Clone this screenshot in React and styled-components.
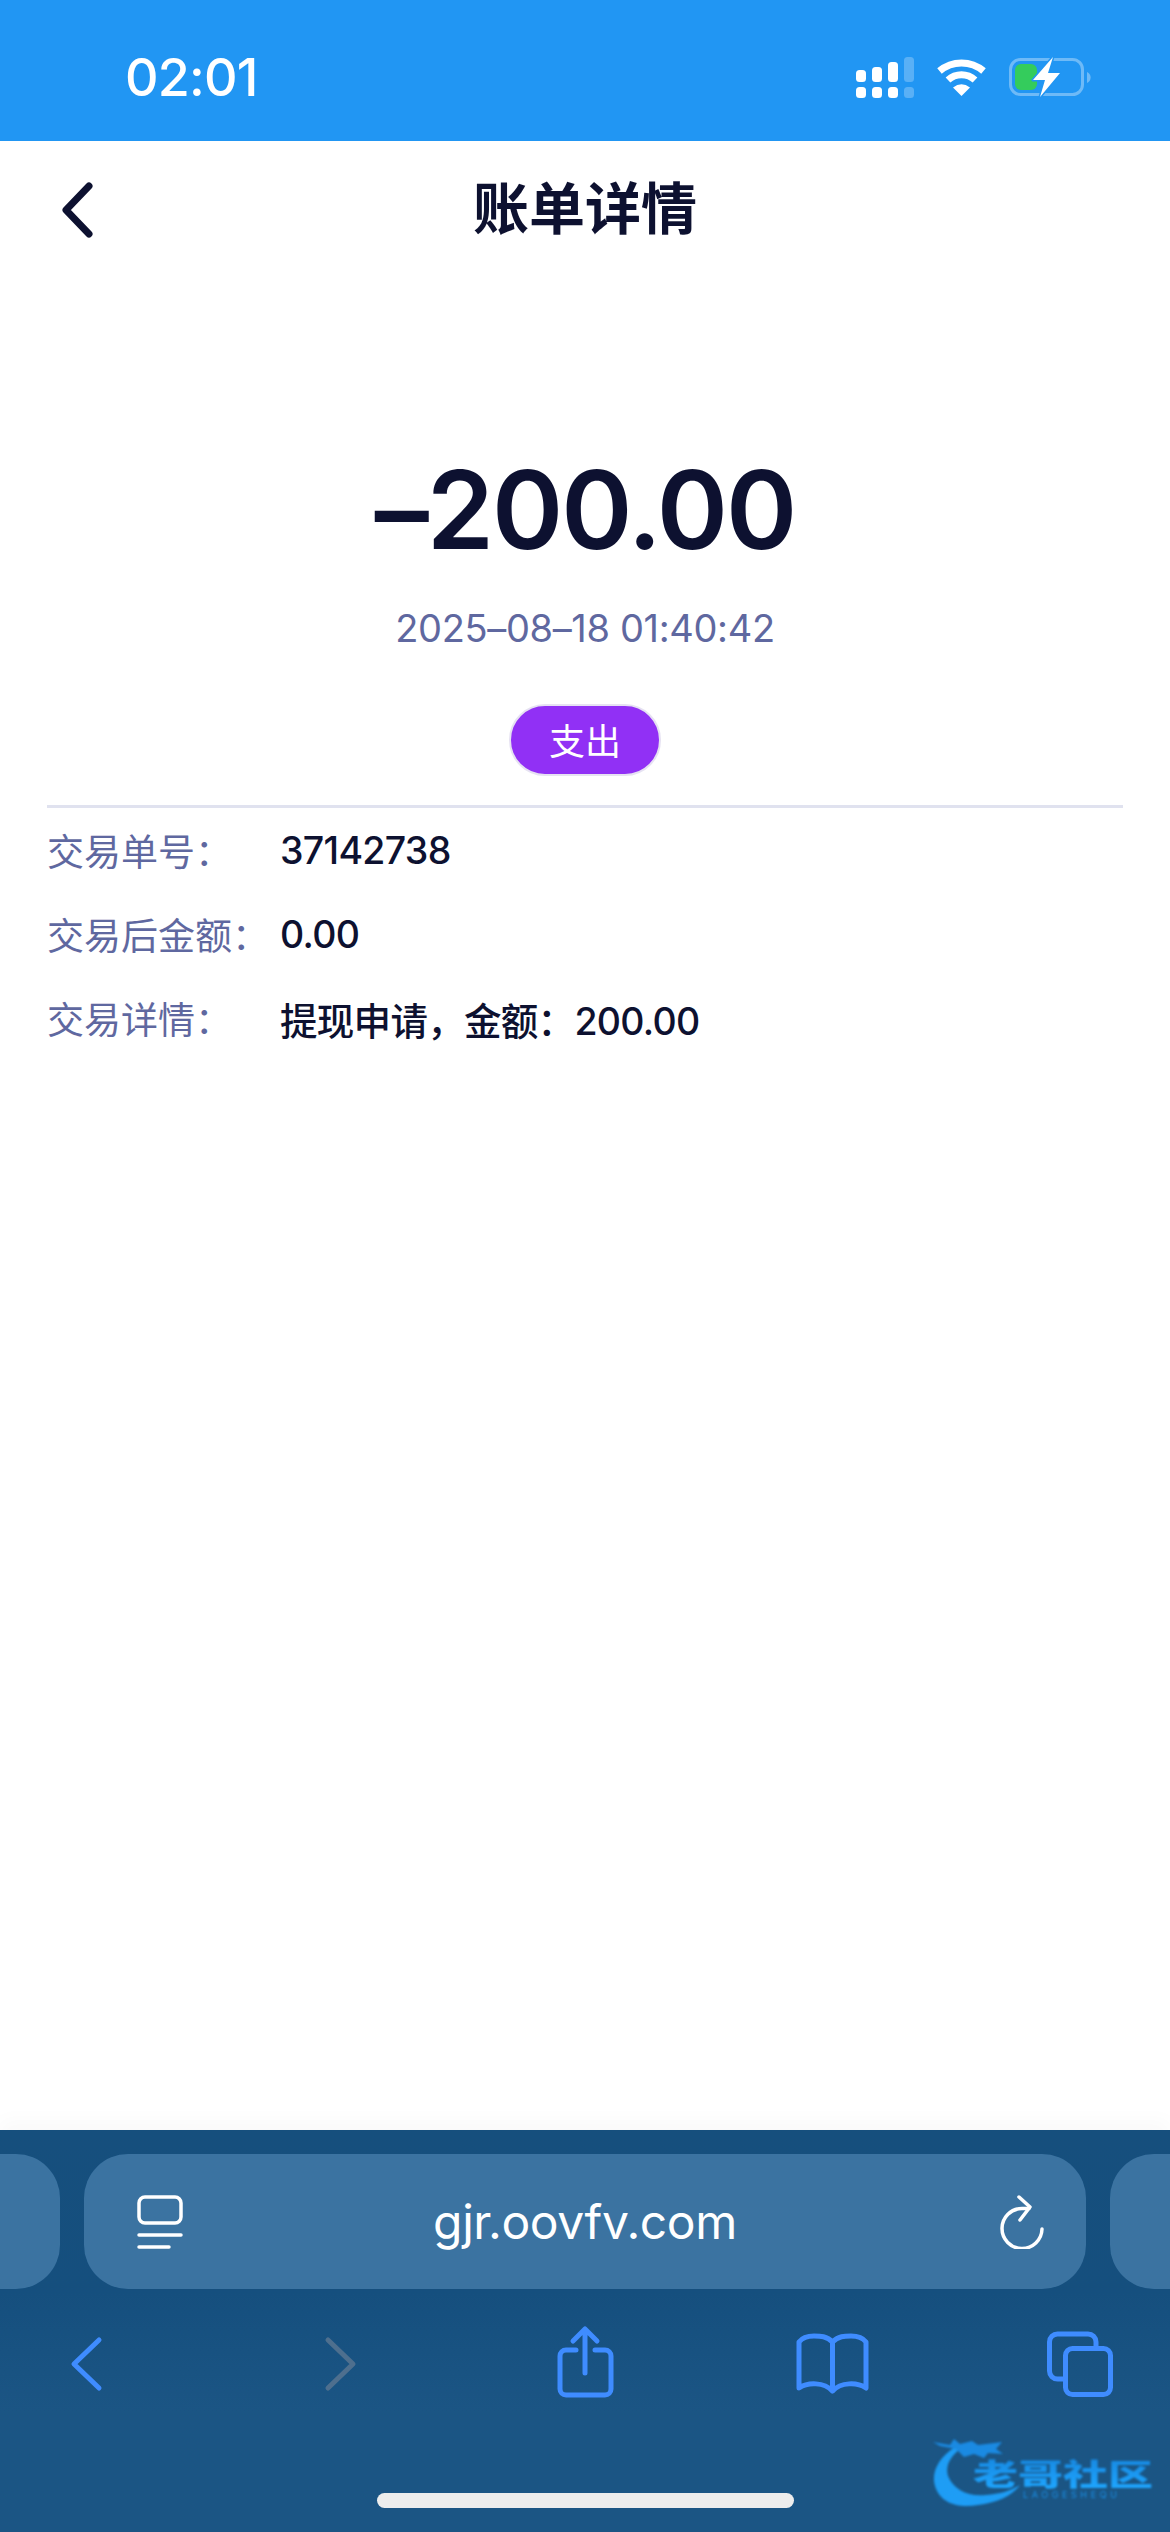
import React from "react";
import styled, { createGlobalStyle } from "styled-components";

const GlobalStyle = createGlobalStyle`
  html, body {
    margin: 0;
    padding: 0;
    background: #fff;
  }
  body {
    font-family: Inter, "Noto Sans CJK SC", sans-serif;
  }
`;

const Page = styled.div`
  width: 1170px;
  height: 2532px;
  display: flex;
  flex-direction: column;
  overflow: hidden;
`;

const StatusBar = styled.div`
  height: 141px;
  flex: none;
  background: #2196f3;
  display: flex;
  justify-content: space-between;
  padding: 56px 79px 0 125px;
  box-sizing: border-box;
  color: #fff;
`;

const Time = styled.div`
  font-size: 52px;
  line-height: 44px;
  font-weight: 500;
  letter-spacing: -0.8px;
`;

const StatusIcons = styled.div`
  display: flex;
  gap: 22px;
  align-items: flex-start;
`;

const Main = styled.main`
  flex: 1;
  display: flex;
  flex-direction: column;
  align-items: center;
`;

const Header = styled.header`
  width: 100%;
  height: 136px;
  display: grid;
  grid-template-columns: 1fr auto 1fr;
  align-items: center;
  padding-left: 58px;
  box-sizing: border-box;
`;

const BackIcon = styled.svg`
  margin-top: 2px;
  fill: none;
  stroke: #0d1130;
  stroke-width: 7;
  stroke-linecap: round;
  stroke-linejoin: round;
`;

const Title = styled.h1`
  margin: 0;
  font: 700 56px/70px Inter, "Noto Sans CJK SC", sans-serif;
  color: #0d1130;
  transform: translateX(-29px);
`;

const Amount = styled.div`
  margin-top: 173px;
  font-size: 108px;
  line-height: 120px;
  font-weight: 600;
  letter-spacing: -2px;
  color: #0d1130;
`;

const DateText = styled.div`
  margin-top: 33px;
  font-size: 38px;
  line-height: 50px;
  letter-spacing: -0.35px;
  color: #5f68a0;
`;

const Pill = styled.div`
  margin-top: 51px;
  width: 152px;
  height: 72px;
  box-sizing: border-box;
  border: 2px solid #e6e2f2;
  border-radius: 36px;
  padding-bottom: 3px;
  background: #9130f5;
  color: #fff;
  font-size: 36px;
  display: flex;
  align-items: center;
  justify-content: center;
`;

const Divider = styled.div`
  margin-top: 29px;
  width: 1076px;
  height: 3px;
  background: #e0e2ef;
`;

const Rows = styled.div`
  width: 1076px;
`;

const Row = styled.div`
  height: 84px;
  display: grid;
  grid-template-columns: 233px 1fr;
  align-items: center;
`;

const Label = styled.div`
  font-size: 37px;
  color: #5f68a0;
`;

const Value = styled.div`
  font-size: 37.5px;
  font-weight: 500;
  letter-spacing: -0.7px;
  color: #0d1130;
`;

const Toolbar = styled.footer`
  position: relative;
  height: 402px;
  flex: none;
  background: linear-gradient(#164f7d, #154f7e 40%, #1b5584 70%);
  box-shadow: 0 -10px 18px rgba(0, 0, 0, 0.025);
  display: flex;
  flex-direction: column;
`;

const TabRow = styled.div`
  margin-top: 24px;
  height: 135px;
  display: flex;
  gap: 24px;
`;

const TabPeek = styled.div`
  width: 60px;
  background: #3b73a1;
  border-radius: ${(p) => (p.$side === "left" ? "0 44px 44px 0" : "44px 0 0 44px")};
`;

const UrlBar = styled.div`
  flex: 1;
  background: #3b73a1;
  border-radius: 44px;
  display: grid;
  grid-template-columns: 1fr auto 1fr;
  align-items: center;
  padding: 0 48px;
  color: #fff;
`;

const UrlText = styled.div`
  font-size: 48px;
  line-height: 60px;
  letter-spacing: -0.4px;
`;

const Reader = styled.svg`
  margin-left: 5px;
`;

const Reload = styled.svg`
  justify-self: end;
  margin-right: -7px;
`;

const NavRow = styled.div`
  margin-top: 33px;
  padding-left: 36px;
  display: flex;
  gap: 148px;
`;

const NavIcon = styled.svg`
  width: 100px;
  height: 80px;
  flex: none;
  fill: none;
  stroke: ${(p) => p.$color || "#3f8cff"};
  stroke-width: 5;
  stroke-linecap: round;
  stroke-linejoin: round;
`;

const HomeBar = styled.div`
  margin: 91px auto 0;
  width: 417px;
  height: 15px;
  border-radius: 8px;
  background: #ededed;
`;

const Watermark = styled.div`
  position: absolute;
  left: 930px;
  top: 300px;
  width: 230px;
  height: 90px;
  filter: blur(1px);
`;

const WatermarkName = styled.span`
  position: absolute;
  left: 43px;
  top: 16px;
  font: 900 45px/52px "Noto Sans CJK SC", sans-serif;
  white-space: nowrap;
  transform: scaleY(0.66);
  background: linear-gradient(#1786de, #1ea6ff);
  -webkit-background-clip: text;
  background-clip: text;
  color: transparent;
`;

const WatermarkLatin = styled.span`
  position: absolute;
  left: 93px;
  top: 59px;
  font: 400 9px/12px Inter, sans-serif;
  letter-spacing: 3.6px;
  color: #1a8fe6;
  white-space: nowrap;
`;

const SignalIcon = () => (
  <svg width="58" height="45" viewBox="0 0 58 45" style={{ marginTop: 1 }}>
    <g fill="#fff">
      <rect x="0" y="13" width="10" height="12" rx="3.5" />
      <rect x="16" y="10" width="10" height="15" rx="3.5" />
      <rect x="32" y="5" width="10" height="20" rx="3.5" />
      <rect x="0" y="30" width="10" height="11" rx="3.5" />
      <rect x="16" y="30" width="10" height="11" rx="3.5" />
      <rect x="32" y="30" width="10" height="11" rx="3.5" />
    </g>
    <g fill="#fff" opacity="0.25">
      <rect x="48" y="0" width="10" height="25" rx="3.5" />
      <rect x="48" y="30" width="10" height="11" rx="3.5" />
    </g>
  </svg>
);

const WifiIcon = () => (
  <svg width="51" height="38" viewBox="0 0 51 38" style={{ marginTop: 3 }}>
    <g fill="none" stroke="#fff" strokeWidth="7">
      <path d="M3.5 12A34 34 0 0 1 47.5 12" />
      <path d="M12 21A20 20 0 0 1 39 21" />
    </g>
    <path d="M17 28.5Q25.5 22 34 28.5L25.5 37Z" fill="#fff" />
  </svg>
);

const BatteryIcon = () => (
  <svg width="82" height="42" viewBox="0 0 82 42">
    <rect x="1.5" y="3.5" width="72" height="35" rx="10" fill="none" stroke="#fff" strokeOpacity="0.35" strokeWidth="3" />
    <path d="M78 16a6 6 0 0 1 0 11Z" fill="#fff" fillOpacity="0.35" />
    <rect x="6" y="8" width="22" height="26" rx="6" fill="#34cc5c" />
    <path
      d="M44 1L24 24H36L31 41L51 17H39Z"
      fill="#fff"
      stroke="#2196f3"
      strokeWidth="3"
      strokeLinejoin="round"
      paintOrder="stroke"
    />
  </svg>
);

const BackChevron = () => (
  <BackIcon width="36" height="56" viewBox="0 0 36 56">
    <path d="M31 4L8 28L31 52" />
  </BackIcon>
);

const ReaderIcon = () => (
  <Reader width="46" height="54" viewBox="0 0 46 54" fill="none" stroke="#fff" strokeWidth="3.5" strokeLinecap="round">
    <rect x="2" y="2" width="42" height="26" rx="6" />
    <path d="M2 40H44" />
    <path d="M2 52H32" />
  </Reader>
);

const ReloadIcon = () => (
  <Reload width="46" height="54" viewBox="0 0 46 54" fill="none" stroke="#fff" strokeWidth="3.5" strokeLinecap="round" strokeLinejoin="round">
    <path d="M43 34A20 20 0 1 1 23 13.5H30" />
    <path d="M20 2L31 12L21 25" />
  </Reload>
);

const rows = [
  { label: "交易单号：", value: "37142738" },
  { label: "交易后金额：", value: "0.00" },
  { label: "交易详情：", value: "提现申请，金额：200.00" },
];

const App = () => (
  <Page>
    <GlobalStyle />
    <StatusBar>
      <Time>02:01</Time>
      <StatusIcons>
        <SignalIcon />
        <WifiIcon />
        <BatteryIcon />
      </StatusIcons>
    </StatusBar>
    <Main>
      <Header>
        <BackChevron />
        <Title>账单详情</Title>
      </Header>
      <Amount>–200.00</Amount>
      <DateText>2025–08–18 01:40:42</DateText>
      <Pill>支出</Pill>
      <Divider />
      <Rows>
        {rows.map((row) => (
          <Row key={row.label}>
            <Label>{row.label}</Label>
            <Value>{row.value}</Value>
          </Row>
        ))}
      </Rows>
    </Main>
    <Toolbar>
      <TabRow>
        <TabPeek $side="left" />
        <UrlBar>
          <ReaderIcon />
          <UrlText>gjr.oovfv.com</UrlText>
          <ReloadIcon />
        </UrlBar>
        <TabPeek $side="right" />
      </TabRow>
      <NavRow>
        <NavIcon viewBox="0 0 100 80">
          <path d="M63 18L38 42L63 66" />
        </NavIcon>
        <NavIcon viewBox="0 0 100 80" $color="#4e6f8e">
          <path d="M44 18L69 42L44 66" />
        </NavIcon>
        <NavIcon viewBox="0 0 100 80">
          <path d="M44 28H34a6 6 0 0 0-6 6V67a6 6 0 0 0 6 6H73a6 6 0 0 0 6-6V34a6 6 0 0 0-6-6H63" />
          <path d="M53 51V8M41 19L53 7L65 19" />
        </NavIcon>
        <NavIcon viewBox="0 0 100 80">
          <path d="M52.5 20C47 14 40 14 34 14C28 14 22 16 19 20V66C28 60 44 60 52.5 69C61 60 77 60 86 66V20C83 16 77 14 71 14C65 14 58 14 52.5 20V69" />
        </NavIcon>
        <NavIcon viewBox="0 0 100 80">
          <path d="M68 24V20a8 8 0 0 0-8-8H29.5a8 8 0 0 0-8 8V49a8 8 0 0 0 8 8H37" />
          <rect x="37.5" y="26.5" width="45" height="46" rx="7" />
        </NavIcon>
      </NavRow>
      <HomeBar />
      <Watermark>
        <svg width="100" height="90" viewBox="0 0 100 90">
          <path d="M25 17C8 28 1 43 5 56C11 75 30 78 48 75C66 73 82 66 90 55C80 61 70 64 56 65C38 67 24 60 18 46C15 36 20 27 30 19Z" fill="#1e9df5" />
          <path d="M3 12L20 15L24 9L30 14L42 11L48 15L72 12L66 19L73 24L58 23L54 28L44 24L34 27L26 19L10 16Z" fill="#1a8ae2" />
        </svg>
        <WatermarkName>老哥社区</WatermarkName>
        <WatermarkLatin>LAOGESHEQU</WatermarkLatin>
      </Watermark>
    </Toolbar>
  </Page>
);

export default App;
